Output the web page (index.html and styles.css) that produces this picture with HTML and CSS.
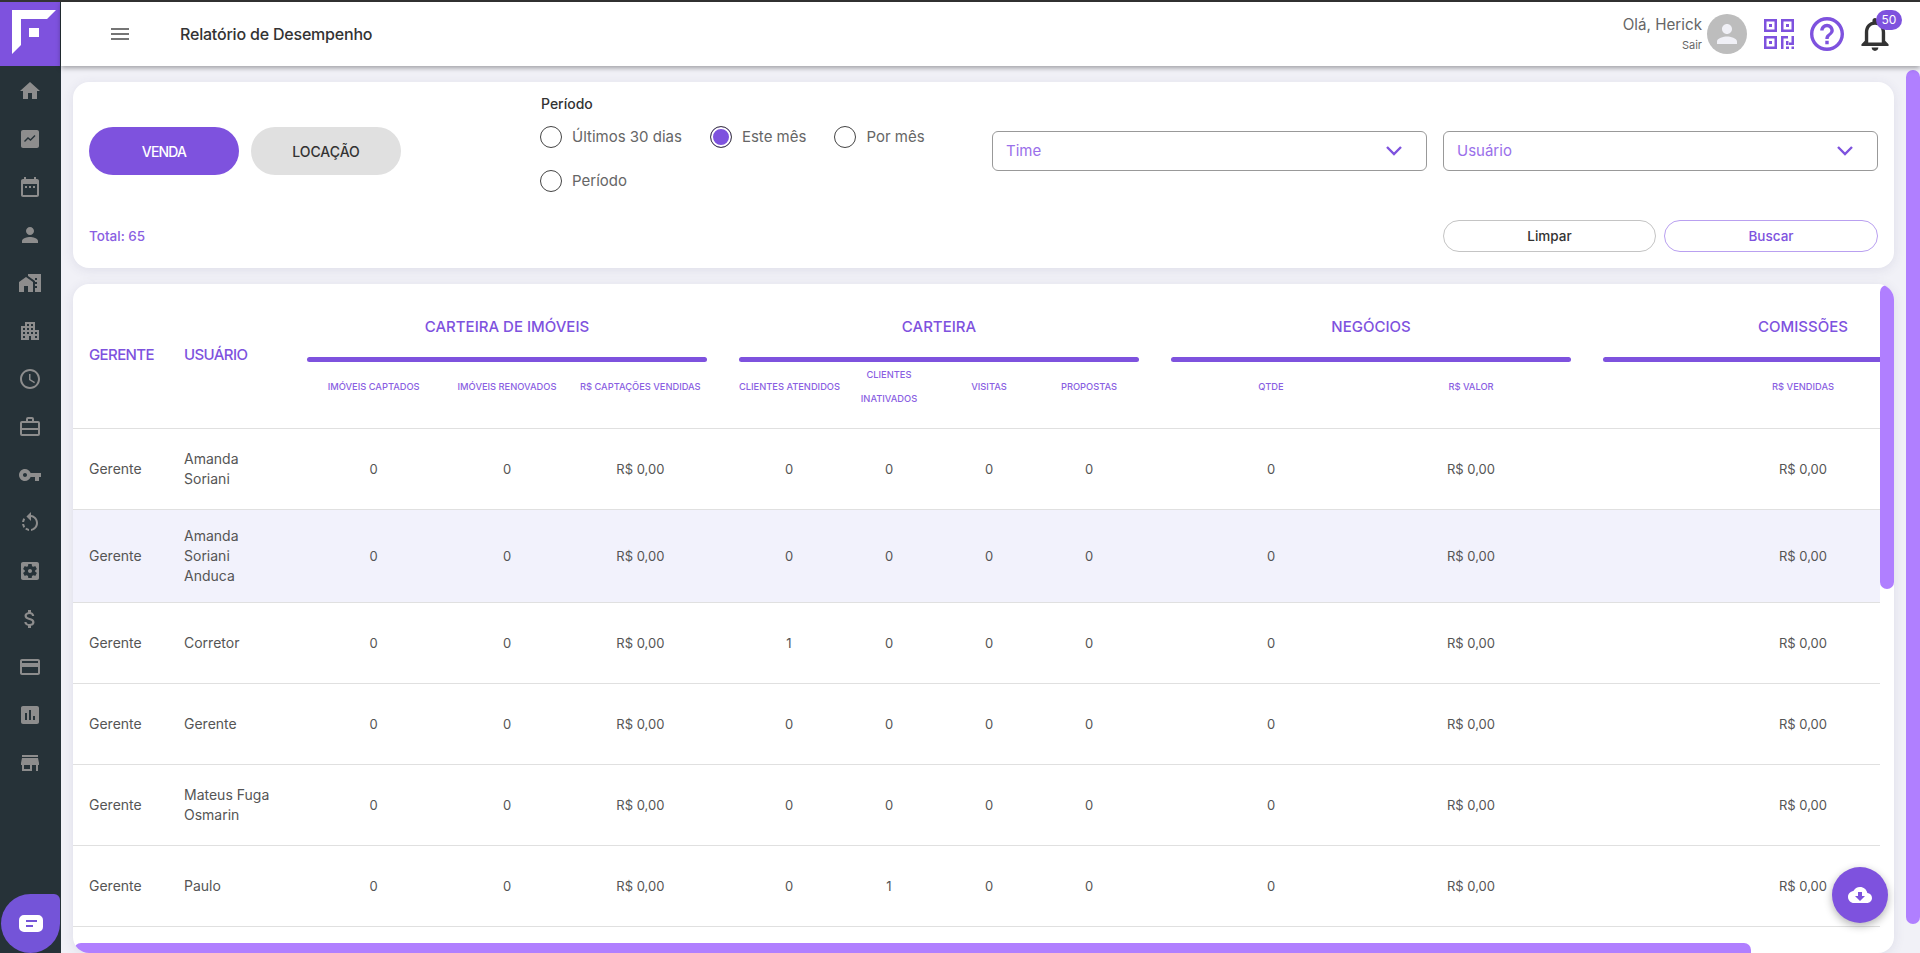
FILE: index.html
```html
<!DOCTYPE html>
<html lang="pt-BR">
<head>
<meta charset="utf-8">
<title>Relatório de Desempenho</title>
<link rel="stylesheet" href="styles.css">
</head>
<body>
<div class="app">
  <aside class="sidebar">
    <div class="logo">
      <svg viewBox="0 0 60 64" width="60" height="64"><path fill="#fff" d="M12 8h44l-9 9H21v26l-9 9z"/><rect x="29" y="26" width="10" height="9" fill="#fff"/></svg>
    </div>
    <nav class="nav">
      <svg class="ico" viewBox="0 0 24 24"><path d="M10 20v-6h4v6h5v-8h3L12 3 2 12h3v8z"/></svg>
      <svg class="ico" viewBox="0 0 24 24"><path d="M19 3H5c-1.100 0-2 .9-2 2v14c0 1.100.9 2 2 2h14c1.100 0 2-.9 2-2V5c0-1.100-.9-2-2-2z"/><path class="ico-line" d="M6.500 14.500l3.500-3.500 2.500 2 4.500-4.500"/></svg>
      <svg class="ico" viewBox="0 0 24 24"><path d="M9 11H7v2h2v-2zm4 0h-2v2h2v-2zm4 0h-2v2h2v-2zm2-7h-1V2h-2v2H8V2H6v2H5c-1.110 0-1.990.9-1.990 2L3 20c0 1.100.89 2 2 2h14c1.100 0 2-.9 2-2V6c0-1.100-.9-2-2-2zm0 16H5V9h14v11z"/></svg>
      <svg class="ico" viewBox="0 0 24 24"><path d="M12 12c2.210 0 4-1.790 4-4s-1.790-4-4-4-4 1.790-4 4 1.790 4 4 4zm0 2c-2.670 0-8 1.340-8 4v2h16v-2c0-2.660-5.330-4-8-4z"/></svg>
      <svg class="ico" viewBox="0 0 24 24"><path d="M1 11v10h5v-6h4v6h5V11L8 6z"/><path d="M10 3v1.970l7 5V11h2v2h-2v2h2v2h-2v4h6V3H10zm9 6h-2V7h2v2z"/></svg>
      <svg class="ico" viewBox="0 0 24 24"><path d="M17 11V3H7v4H3v14h8v-4h2v4h8V11h-4zM7 19H5v-2h2v2zm0-4H5v-2h2v2zm0-4H5V9h2v2zm4 4H9v-2h2v2zm0-4H9V9h2v2zm0-4H9V5h2v2zm4 8h-2v-2h2v2zm0-4h-2V9h2v2zm0-4h-2V5h2v2zm4 12h-2v-2h2v2zm0-4h-2v-2h2v2z"/></svg>
      <svg class="ico" viewBox="0 0 24 24"><path d="M11.990 2C6.470 2 2 6.480 2 12s4.470 10 9.990 10C17.520 22 22 17.520 22 12S17.520 2 11.990 2zM12 20c-4.420 0-8-3.580-8-8s3.580-8 8-8 8 3.580 8 8-3.580 8-8 8z"/><path d="M12.500 7H11v6l5.250 3.150.75-1.230-4.500-2.670z"/></svg>
      <svg class="ico" viewBox="0 0 24 24"><path d="M20 6h-4V4a2 2 0 0 0-2-2h-4a2 2 0 0 0-2 2v2H4a2 2 0 0 0-2 2v11a2 2 0 0 0 2 2h16a2 2 0 0 0 2-2V8a2 2 0 0 0-2-2zM10 4h4v2h-4zM4 8h16v5H4zm0 11v-4h16v4z"/></svg>
      <svg class="ico" viewBox="0 0 24 24"><path d="M12.650 10C11.830 7.670 9.610 6 7 6c-3.310 0-6 2.690-6 6s2.690 6 6 6c2.610 0 4.830-1.670 5.650-4H17v4h4v-4h2v-4H12.650zM7 14c-1.100 0-2-.9-2-2s.9-2 2-2 2 .9 2 2-.9 2-2 2z"/></svg>
      <svg class="ico" viewBox="0 0 24 24"><path d="M7.110 8.530L5.700 7.110C4.800 8.270 4.240 9.610 4.070 11h2.020c.14-.87.49-1.720 1.020-2.470zM6.090 13H4.070c.17 1.390.72 2.730 1.620 3.890l1.410-1.420c-.52-.75-.87-1.590-1.010-2.470zm1.010 5.320c1.160.9 2.510 1.440 3.900 1.610V17.900c-.87-.15-1.710-.49-2.460-1.030L7.100 18.320zM13 4.070V1L8.450 5.550 13 10V6.090c2.840.48 5 2.940 5 5.910s-2.160 5.430-5 5.910v2.020c3.950-.49 7-3.850 7-7.930s-3.050-7.440-7-7.930z"/></svg>
      <svg class="ico" viewBox="0 0 24 24"><path d="M12 10c-1.100 0-2 .9-2 2s.9 2 2 2 2-.9 2-2-.9-2-2-2zm7-7H5c-1.110 0-2 .9-2 2v14c0 1.100.89 2 2 2h14c1.110 0 2-.9 2-2V5c0-1.100-.89-2-2-2zm-1.750 9c0 .23-.02.46-.05.68l1.480 1.160c.13.11.17.3.08.45l-1.400 2.420c-.09.15-.27.21-.43.15l-1.740-.7c-.36.28-.76.51-1.180.69l-.26 1.850c-.03.17-.18.3-.35.3h-2.800c-.17 0-.32-.13-.35-.29l-.26-1.850c-.43-.18-.82-.41-1.180-.69l-1.740.7c-.16.06-.34 0-.43-.15l-1.400-2.420c-.09-.15-.05-.34.08-.45l1.480-1.160c-.03-.23-.05-.46-.05-.69 0-.23.02-.46.05-.68l-1.480-1.160c-.13-.11-.17-.3-.08-.45l1.400-2.420c.09-.15.27-.21.43-.15l1.740.7c.36-.28.76-.51 1.180-.69l.26-1.850c.03-.17.18-.3.35-.3h2.800c.17 0 .32.13.35.29l.26 1.850c.43.18.82.41 1.180.69l1.740-.7c.16-.06.34 0 .43.15l1.400 2.420c.09.15.05.34-.08.45l-1.480 1.160c.03.23.05.46.05.69z"/></svg>
      <svg class="ico" viewBox="0 0 24 24"><path d="M11.800 10.900c-2.270-.59-3-1.200-3-2.150 0-1.090 1.010-1.850 2.700-1.850 1.780 0 2.440.85 2.500 2.100h2.210c-.07-1.720-1.120-3.300-3.210-3.810V3h-3v2.160c-1.940.42-3.500 1.680-3.500 3.610 0 2.310 1.910 3.460 4.700 4.130 2.500.6 3 1.480 3 2.410 0 .69-.49 1.790-2.700 1.790-2.060 0-2.870-.92-2.980-2.100h-2.200c.12 2.190 1.760 3.420 3.680 3.830V21h3v-2.150c1.950-.37 3.500-1.500 3.500-3.550 0-2.840-2.430-3.810-4.700-4.400z"/></svg>
      <svg class="ico" viewBox="0 0 24 24"><path d="M20 4H4c-1.110 0-1.990.89-1.990 2L2 18c0 1.110.89 2 2 2h16c1.110 0 2-.89 2-2V6c0-1.110-.89-2-2-2zm0 14H4v-6h16v6zm0-10H4V6h16v2z"/></svg>
      <svg class="ico" viewBox="0 0 24 24"><path d="M19 3H5c-1.100 0-2 .9-2 2v14c0 1.100.9 2 2 2h14c1.100 0 2-.9 2-2V5c0-1.100-.9-2-2-2zM9 17H7v-7h2v7zm4 0h-2V7h2v10zm4 0h-2v-4h2v4z"/></svg>
      <svg class="ico" viewBox="0 0 24 24"><path d="M20 4H4v2h16V4zm1 10v-2l-1-5H4l-1 5v2h1v6h10v-6h4v6h2v-6h1zm-9 4H6v-4h6v4z"/></svg>
    </nav>
    <button class="chat-fab" aria-label="Chat">
      <svg viewBox="0 0 24 17" width="24" height="17"><path fill="#fff" fill-rule="evenodd" d="M5 0h14a5 5 0 0 1 5 5v7a5 5 0 0 1-5 5H5a5 5 0 0 1-5-5V5a5 5 0 0 1 5-5zm2 5v2h11V5zm0 5v2h7v-2z"/></svg>
    </button>
  </aside>

  <div class="workspace">
    <header class="topbar">
      <div class="topbar-left">
        <svg class="menu-ico" viewBox="0 0 18 12" width="18" height="12"><path d="M0 0h18v2H0zM0 5h18v2H0zM0 10h18v2H0z"/></svg>
        <h1 class="page-title">Relatório de Desempenho</h1>
      </div>
      <div class="topbar-right">
        <div class="greet">
          <span class="greet-name">Olá, Herick</span>
          <span class="greet-out">Sair</span>
        </div>
        <div class="avatar">
          <svg viewBox="0 0 24 24" width="30" height="30"><path fill="#f0f0f6" d="M12 12c2.210 0 4-1.790 4-4s-1.790-4-4-4-4 1.790-4 4 1.790 4 4 4zm0 2c-2.670 0-8 1.340-8 4v2h16v-2c0-2.660-5.330-4-8-4z"/></svg>
        </div>
        <svg class="qr-ico" viewBox="0 0 30 30" width="30" height="30"><path fill-rule="evenodd" d="M0 0h13v13H0zM2.500 2.500v8h8v-8zM17 0h13v13H17zM19.500 2.500v8h8v-8zM0 17h13v13H0zM2.500 19.500v8h8v-8z"/><path d="M5 5h3v3H5zM22 5h3v3h-3zM5 22h3v3H5zM17 17h7v2.500h-4.500V30H17zM22 22h2.500v4H22zM27.500 17H30v9h-5v-2.500h2.500zM22 27.500h3V30h-3zM27.500 27.500H30V30h-2.500z"/></svg>
        <svg class="help-ico" viewBox="2 2 20 20" width="34" height="34"><path d="M11 18h2v-2h-2v2zm1-16C6.480 2 2 6.480 2 12s4.480 10 10 10 10-4.480 10-10S17.520 2 12 2zm0 18c-4.410 0-8-3.590-8-8s3.590-8 8-8 8 3.590 8 8-3.590 8-8 8zm0-14c-2.210 0-4 1.790-4 4h2c0-1.100.9-2 2-2s2 .9 2 2c0 2-3 1.750-3 5h2c0-2.250 3-2.500 3-5 0-2.210-1.790-4-4-4z"/></svg>
        <div class="bell">
          <svg viewBox="4 2.500 16 19.500" width="28" height="33"><path fill="#333" d="M12 22c1.100 0 2-.9 2-2h-4c0 1.100.9 2 2 2zm6-6v-5c0-3.070-1.630-5.640-4.500-6.320V4c0-.83-.67-1.500-1.500-1.500s-1.500.67-1.500 1.500v.68C7.640 5.360 6 7.920 6 11v5l-2 2v1h16v-1l-2-2zm-2 1H8v-6c0-2.480 1.510-4.500 4-4.500s4 2.020 4 4.500v6z"/></svg>
          <span class="badge">50</span>
        </div>
      </div>
    </header>

    <main class="content">
      <div class="page-thumb"></div>
      <section class="card filters">
        <div class="tabs">
          <button class="pill pill-on">VENDA</button>
          <button class="pill pill-off">LOCAÇÃO</button>
        </div>
        <div class="period">
          <div class="period-label">Período</div>
          <div class="radios">
            <label class="radio"><span class="dot"></span>Últimos 30 dias</label>
            <label class="radio"><span class="dot dot-on"></span>Este mês</label>
            <label class="radio"><span class="dot"></span>Por mês</label>
            <label class="radio"><span class="dot"></span>Período</label>
          </div>
        </div>
        <div class="select select-time"><span>Time</span><svg viewBox="0 0 16 10" width="16" height="10"><path d="M1 1l7 7 7-7"/></svg></div>
        <div class="select select-user"><span>Usuário</span><svg viewBox="0 0 16 10" width="16" height="10"><path d="M1 1l7 7 7-7"/></svg></div>
        <div class="total">Total: 65</div>
        <div class="actions">
          <button class="outline outline-grey">Limpar</button>
          <button class="outline outline-purple">Buscar</button>
        </div>
      </section>

      <section class="card report">
        <div class="report-inner">
          <div class="grid head">
            <div class="h-main h-gerente">GERENTE</div>
            <div class="h-main h-usuario">USUÁRIO</div>
            <div class="group g1"><div class="g-title">CARTEIRA DE IMÓVEIS</div><div class="g-bar"></div></div>
            <div class="group g2"><div class="g-title">CARTEIRA</div><div class="g-bar"></div></div>
            <div class="group g3"><div class="g-title">NEGÓCIOS</div><div class="g-bar"></div></div>
            <div class="group g4"><div class="g-title">COMISSÕES</div><div class="g-bar"></div></div>
            <div class="sub c3">IMÓVEIS CAPTADOS</div>
            <div class="sub c4">IMÓVEIS RENOVADOS</div>
            <div class="sub c5">R$ CAPTAÇÕES VENDIDAS</div>
            <div class="sub c7">CLIENTES ATENDIDOS</div>
            <div class="sub c8">CLIENTES<br>INATIVADOS</div>
            <div class="sub c9">VISITAS</div>
            <div class="sub c10">PROPOSTAS</div>
            <div class="sub c12">QTDE</div>
            <div class="sub c13">R$ VALOR</div>
            <div class="sub c15">R$ VENDIDAS</div>
          </div>

          <div class="grid row">
            <div class="cell-l">Gerente</div><div class="cell-l name">Amanda Soriani</div>
            <div class="cell c3">0</div><div class="cell c4">0</div><div class="cell c5">R$ 0,00</div>
            <div class="cell c7">0</div><div class="cell c8">0</div><div class="cell c9">0</div><div class="cell c10">0</div>
            <div class="cell c12">0</div><div class="cell c13">R$ 0,00</div><div class="cell c15">R$ 0,00</div>
          </div>
          <div class="grid row row-alt">
            <div class="cell-l">Gerente</div><div class="cell-l name">Amanda Soriani Anduca</div>
            <div class="cell c3">0</div><div class="cell c4">0</div><div class="cell c5">R$ 0,00</div>
            <div class="cell c7">0</div><div class="cell c8">0</div><div class="cell c9">0</div><div class="cell c10">0</div>
            <div class="cell c12">0</div><div class="cell c13">R$ 0,00</div><div class="cell c15">R$ 0,00</div>
          </div>
          <div class="grid row">
            <div class="cell-l">Gerente</div><div class="cell-l name">Corretor</div>
            <div class="cell c3">0</div><div class="cell c4">0</div><div class="cell c5">R$ 0,00</div>
            <div class="cell c7">1</div><div class="cell c8">0</div><div class="cell c9">0</div><div class="cell c10">0</div>
            <div class="cell c12">0</div><div class="cell c13">R$ 0,00</div><div class="cell c15">R$ 0,00</div>
          </div>
          <div class="grid row">
            <div class="cell-l">Gerente</div><div class="cell-l name">Gerente</div>
            <div class="cell c3">0</div><div class="cell c4">0</div><div class="cell c5">R$ 0,00</div>
            <div class="cell c7">0</div><div class="cell c8">0</div><div class="cell c9">0</div><div class="cell c10">0</div>
            <div class="cell c12">0</div><div class="cell c13">R$ 0,00</div><div class="cell c15">R$ 0,00</div>
          </div>
          <div class="grid row">
            <div class="cell-l">Gerente</div><div class="cell-l name">Mateus Fuga Osmarin</div>
            <div class="cell c3">0</div><div class="cell c4">0</div><div class="cell c5">R$ 0,00</div>
            <div class="cell c7">0</div><div class="cell c8">0</div><div class="cell c9">0</div><div class="cell c10">0</div>
            <div class="cell c12">0</div><div class="cell c13">R$ 0,00</div><div class="cell c15">R$ 0,00</div>
          </div>
          <div class="grid row">
            <div class="cell-l">Gerente</div><div class="cell-l name">Paulo</div>
            <div class="cell c3">0</div><div class="cell c4">0</div><div class="cell c5">R$ 0,00</div>
            <div class="cell c7">0</div><div class="cell c8">1</div><div class="cell c9">0</div><div class="cell c10">0</div>
            <div class="cell c12">0</div><div class="cell c13">R$ 0,00</div><div class="cell c15">R$ 0,00</div>
          </div>
        </div>
        <div class="v-thumb"></div>
        <div class="h-thumb"></div>
      </section>

      <button class="dl-fab" aria-label="Baixar">
        <svg viewBox="0 0 24 24" width="24" height="24"><path fill="#fff" d="M19.350 10.040C18.670 6.590 15.640 4 12 4 9.110 4 6.600 5.640 5.350 8.040 2.340 8.360 0 10.910 0 14c0 3.310 2.690 6 6 6h13c2.760 0 5-2.240 5-5 0-2.640-2.050-4.780-4.650-4.960zM17 13l-5 5-5-5h3V9h4v4h3z"/></svg>
      </button>
    </main>
  </div>
</div>
</body>
</html>
```

FILE: styles.css
```css
* { box-sizing: border-box; }
html, body { margin: 0; height: 100%; overflow: hidden; }
body {
  font-family: "Inter", "Liberation Sans", sans-serif;
  color: #555;
  background: #f1f1f7;
}
button { font-family: inherit; border: 0; cursor: pointer; padding: 0; }

.app { display: flex; height: 953px; border-top: 2px solid #333; }

/* sidebar */
.sidebar {
  position: relative;
  flex: 0 0 61px;
  background: #263238;
  display: flex;
  flex-direction: column;
}
.logo { width: 60px; height: 64px; background: #7e52de; }
.logo svg { display: block; }
.nav {
  display: flex;
  flex-direction: column;
  align-items: center;
  gap: 24px;
  padding-top: 13px;
  padding-right: 1px;
}
.ico { width: 24px; height: 24px; flex: none; fill: #8d8d8d; }
.ico-line { fill: none; stroke: #263238; stroke-width: 1.4; }
.chat-fab {
  position: absolute;
  left: 1px;
  bottom: 0;
  width: 59px;
  height: 59px;
  background: #7454d8;
  border-radius: 50% 6px 50% 50%;
  display: flex;
  align-items: center;
  justify-content: center;
}

/* topbar */
.workspace { flex: 1; min-width: 0; display: flex; flex-direction: column; }
.topbar {
  position: relative;
  z-index: 2;
  flex: 0 0 64px;
  background: #fff;
  box-shadow: 0 2px 5px rgba(0,0,0,.35);
  display: flex;
  align-items: center;
  justify-content: space-between;
}
.topbar-left { display: flex; align-items: center; padding-left: 50px; gap: 51px; }
.menu-ico { fill: #757575; }
.page-title { margin: 0; font-size: 16px; font-weight: 500; color: #333; letter-spacing: -.2px; }
.topbar-right { display: flex; align-items: center; padding-right: 18px; }
.greet { display: flex; flex-direction: column; align-items: flex-end; margin-right: 5px; }
.greet-name { font-size: 15.200px; line-height: 20px; color: #666; }
.greet-out { font-size: 11px; line-height: 16px; margin-top: 2px; color: #666; }
.avatar {
  width: 40px; height: 40px; border-radius: 50%;
  background: #bdbdbd;
  display: flex; align-items: center; justify-content: center;
  margin-right: 17px;
}
.qr-ico { fill: #7e52de; margin-right: 16px; }
.help-ico { fill: #7e52de; margin-right: 17px; }
.bell { position: relative; width: 41px; height: 33px; }
.bell svg { display: block; }
.badge {
  position: absolute;
  top: -8px;
  left: 15px;
  width: 26px;
  height: 20px;
  border-radius: 10px;
  background: #7e52de;
  color: #fff;
  font-size: 12px;
  line-height: 20px;
  text-align: center;
}

/* content */
.content {
  position: relative;
  flex: 1;
  min-height: 0;
  overflow: hidden;
  padding: 16px 26px 0 12px;
  display: flex;
  flex-direction: column;
  gap: 16px;
}
.page-thumb {
  position: absolute;
  top: 4px;
  right: 0;
  width: 14px;
  height: 854px;
  background: #b07fff;
  border-radius: 7px;
}
.card { background: #fff; border-radius: 16px; box-shadow: 0 2px 12px rgba(60,60,110,.1); }

/* filters */
.filters {
  flex: 0 0 186px;
  padding: 12px 16px 16px;
  display: grid;
  grid-template-columns: 452px 451px 435px 16px 435px;
  grid-template-rows: 1fr 32px;
}
.tabs { grid-column: 1; display: flex; gap: 12px; align-self: start; margin-top: 33px; }
.pill { width: 150px; height: 48px; border-radius: 24px; font-size: 14px; font-weight: 500; }
.pill-on { background: #7e52de; color: #fff; letter-spacing: -.8px; }
.pill-off { background: #e0e0e0; color: #333; }
.period { grid-column: 2; }
.period-label { font-size: 14px; font-weight: 500; color: #333; line-height: 20px; }
.radios { display: flex; flex-wrap: wrap; width: 451px; margin: 12px 0 0 -1px; row-gap: 22px; }
.radio {
  display: flex; align-items: center; gap: 10px;
  font-size: 15px; line-height: 22px; color: #666;
  margin-right: 28px;
}
.dot {
  width: 22px; height: 22px; border-radius: 50%;
  border: 1.5px solid #444; background: #fff; flex: none;
}
.dot-on { background: #7e52de; box-shadow: inset 0 0 0 2px #fff; }
.select {
  height: 40px;
  margin-top: 37px;
  border: 1px solid #999;
  border-radius: 6px;
  display: flex;
  align-items: center;
  justify-content: space-between;
  padding: 0 24px 2px 13px;
  color: #9a70ea;
  font-size: 15px;
}
.select-time { grid-column: 3; }
.select-user { grid-column: 5; }
.select svg { fill: none; stroke: #7e52de; stroke-width: 2.4; margin-top: 2px; }
.total { grid-column: 1 / 3; grid-row: 2; font-size: 13.500px; font-weight: 500; color: #8a5fe2; align-self: center; }
.actions { grid-column: 5; grid-row: 2; display: flex; gap: 8px; }
.outline {
  background: #fff;
  height: 32px;
  border-radius: 16px;
  font-size: 13.500px;
  font-weight: 500;
}
.outline-grey { border: 1px solid #c4c4c4; color: #333; flex: 0 0 213px; }
.outline-purple { border: 1px solid #b9a0f0; color: #7e52de; flex: 1; }

/* report */
.report { position: relative; flex: 1; min-height: 0; overflow: hidden; }
.report-inner { width: 1807px; overflow: hidden; }
.grid {
  display: grid;
  width: 1807px;
  grid-template-columns: 111px 123px repeat(3, 133.33px) 32px repeat(4, 100px) 32px repeat(2, 200px) 32px 400px;
}
.head {
  height: 145px;
  grid-template-rows: 64px 18px 1fr;
  border-bottom: 1px solid #e0e0e0;
}
.h-main { grid-row: 1 / 3; font-size: 15px; font-weight: 500; color: #7e52de; align-self: end; padding-bottom: 2px; letter-spacing: -.6px; }
.h-gerente { grid-column: 1; padding-left: 16px; }
.h-usuario { grid-column: 2; }
.group { grid-row: 1 / 3; display: flex; flex-direction: column; justify-content: flex-end; }
.g-title { font-size: 15px; font-weight: 500; color: #7e52de; text-align: center; line-height: 20px; margin-bottom: 20px; }
.g-bar { height: 5px; background: #7e52de; border-radius: 3px; margin-bottom: 4px; }
.g1 { grid-column: 3 / 6; }
.g2 { grid-column: 7 / 11; }
.g3 { grid-column: 12 / 14; }
.g4 { grid-column: 15 / 16; }
.sub {
  grid-row: 3;
  align-self: center;
  text-align: center;
  font-size: 9.300px;
  font-weight: 500;
  line-height: 24px;
  color: #8a5fe2;
  margin-top: -21px;
  white-space: nowrap;
}
.c3 { grid-column: 3; }
.c4 { grid-column: 4; }
.c5 { grid-column: 5; }
.c7 { grid-column: 7; }
.c8 { grid-column: 8; }
.c9 { grid-column: 9; }
.c10 { grid-column: 10; }
.c12 { grid-column: 12; }
.c13 { grid-column: 13; }
.c15 { grid-column: 15; }
.row {
  min-height: 81px;
  border-bottom: 1px solid #e0e0e0;
  align-items: center;
  padding: 16px 0;
  font-size: 13px;
  line-height: 20px;
}
.row-alt { background: #f2f2fc; }
.cell-l { padding-left: 16px; font-size: 14px; }
.name { padding-left: 0; width: 90px; }
.cell { text-align: center; }

.v-thumb {
  position: absolute; top: 1px; right: 0; width: 14px; height: 304px;
  background: #b07fff; border-radius: 7px;
}
.h-thumb {
  position: absolute; left: 1px; bottom: 0; width: 1677px; height: 10px;
  background: #b07fff; border-radius: 7px 7px 0 0;
}
.dl-fab {
  position: absolute;
  right: 32px;
  bottom: 30px;
  width: 56px;
  height: 56px;
  border-radius: 50%;
  background: #7e52de;
  box-shadow: 0 3px 8px rgba(0,0,0,.3);
  display: flex;
  align-items: center;
  justify-content: center;
}
```
